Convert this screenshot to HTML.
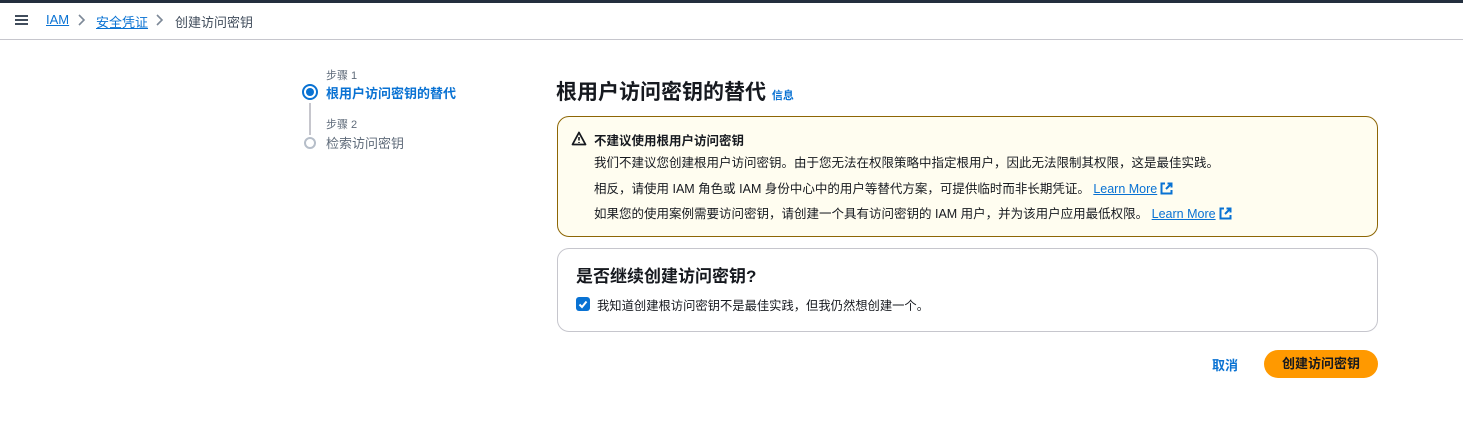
<!DOCTYPE html>
<html><head><meta charset="utf-8"><style>
*{box-sizing:border-box;margin:0;padding:0}
body{width:1463px;height:443px;background:#fff;font-family:"Liberation Sans","Noto Sans CJK SC",sans-serif;color:#16191f;position:relative;overflow:hidden}
.top{position:absolute;left:0;top:0;width:1463px;height:3px;background:#232f3e}
.bar{position:absolute;left:0;top:3px;width:1463px;height:37px;border-bottom:1px solid #c6c6cd;font-size:13px}
.abs{position:absolute;white-space:nowrap}
a{color:#0972d3;text-decoration:underline}
.ext{display:inline-block;vertical-align:-2px;margin-left:3px}
</style></head><body>
<div class="top"></div>
<div class="bar">
 <div class="abs" style="left:15px;top:12px;width:13px;height:2px;background:#414d5c;box-shadow:0 4px 0 #414d5c,0 8px 0 #414d5c"></div>
 <a class="abs" style="left:46px;top:9px;color:#0972d3">IAM</a>
 <svg class="abs" style="left:77px;top:11px" width="10" height="12"><path d="M2 1l5 5-5 5" fill="none" stroke="#7d8998" stroke-width="1.6"/></svg>
 <a class="abs" style="left:96px;top:9px">安全凭证</a>
 <svg class="abs" style="left:155px;top:11px" width="10" height="12"><path d="M2 1l5 5-5 5" fill="none" stroke="#7d8998" stroke-width="1.6"/></svg>
 <span class="abs" style="left:175px;top:9px;color:#414d5c">创建访问密钥</span>
</div>
<div class="abs" style="left:326px;top:67px;font-size:11px;color:#5f6b7a">步骤 1</div>
<div class="abs" style="left:326px;top:83px;font-size:13px;font-weight:bold;color:#0972d3">根用户访问密钥的替代</div>
<div class="abs" style="left:302px;top:84px;width:16px;height:16px;border:2px solid #0972d3;border-radius:50%"></div>
<div class="abs" style="left:306px;top:88px;width:8px;height:8px;background:#0972d3;border-radius:50%"></div>
<div class="abs" style="left:309px;top:103px;width:2px;height:32px;background:#c6c6cd"></div>
<div class="abs" style="left:326px;top:116px;font-size:11px;color:#5f6b7a">步骤 2</div>
<div class="abs" style="left:326px;top:133px;font-size:13px;color:#5f6b7a">检索访问密钥</div>
<div class="abs" style="left:304px;top:137px;width:12px;height:12px;border:2px solid #b6bec9;border-radius:50%"></div>

<div class="abs" style="left:556px;top:76px;font-size:21px;font-weight:bold">根用户访问密钥的替代 <span style="font-size:11px;color:#0972d3">信息</span></div>

<div class="abs" style="left:557px;top:116px;width:821px;height:121px;background:#fffdf0;border:1px solid #8d6605;border-radius:12px"></div>
<svg class="abs" style="left:571px;top:131px" width="16" height="15" viewBox="0 0 16 15"><path d="M8 1.5L14.5 13.5H1.5Z" fill="none" stroke="#16191f" stroke-width="1.8" stroke-linejoin="round"/><path d="M8 6v3.5M8 11v1" stroke="#16191f" stroke-width="1.6"/></svg>
<div class="abs" style="left:594px;top:130px;font-size:12.5px;font-weight:bold">不建议使用根用户访问密钥</div>
<div class="abs" style="left:594px;top:152px;font-size:12.5px">我们不建议您创建根用户访问密钥。由于您无法在权限策略中指定根用户，因此无法限制其权限，这是最佳实践。</div>
<div class="abs" style="left:594px;top:178px;font-size:12.5px">相反，请使用 IAM 角色或 IAM 身份中心中的用户等替代方案，可提供临时而非长期凭证。 <a>Learn More</a><svg class="ext" width="13" height="13" viewBox="0 0 13 13"><path d="M5 1.5H1.5v10h10V8" fill="none" stroke="#0972d3" stroke-width="2"/><path d="M7.5 1.5h4v4M11.5 1.5L6 7" fill="none" stroke="#0972d3" stroke-width="2"/></svg></div>
<div class="abs" style="left:594px;top:203px;font-size:12.5px">如果您的使用案例需要访问密钥，请创建一个具有访问密钥的 IAM 用户，并为该用户应用最低权限。 <a>Learn More</a><svg class="ext" width="13" height="13" viewBox="0 0 13 13"><path d="M5 1.5H1.5v10h10V8" fill="none" stroke="#0972d3" stroke-width="2"/><path d="M7.5 1.5h4v4M11.5 1.5L6 7" fill="none" stroke="#0972d3" stroke-width="2"/></svg></div>

<div class="abs" style="left:557px;top:248px;width:821px;height:84px;border:1px solid #c6c6cd;border-radius:12px"></div>
<div class="abs" style="left:576px;top:262px;font-size:17px;font-weight:bold">是否继续创建访问密钥?</div>
<div class="abs" style="left:576px;top:297px;width:14px;height:14px;background:#0972d3;border-radius:3px"></div>
<svg class="abs" style="left:576px;top:297px" width="14" height="14"><path d="M3.5 7.5l2.5 2.5 4.5-5.5" fill="none" stroke="#fff" stroke-width="2"/></svg>
<div class="abs" style="left:597px;top:296px;font-size:12.3px">我知道创建根访问密钥不是最佳实践，但我仍然想创建一个。</div>

<div class="abs" style="left:1212px;top:355px;font-size:13px;font-weight:bold;color:#0972d3">取消</div>
<div class="abs" style="left:1264px;top:350px;width:114px;height:28px;background:#ff9900;border-radius:14px;font-size:13px;font-weight:bold;text-align:center;line-height:28px">创建访问密钥</div>
</body></html>
